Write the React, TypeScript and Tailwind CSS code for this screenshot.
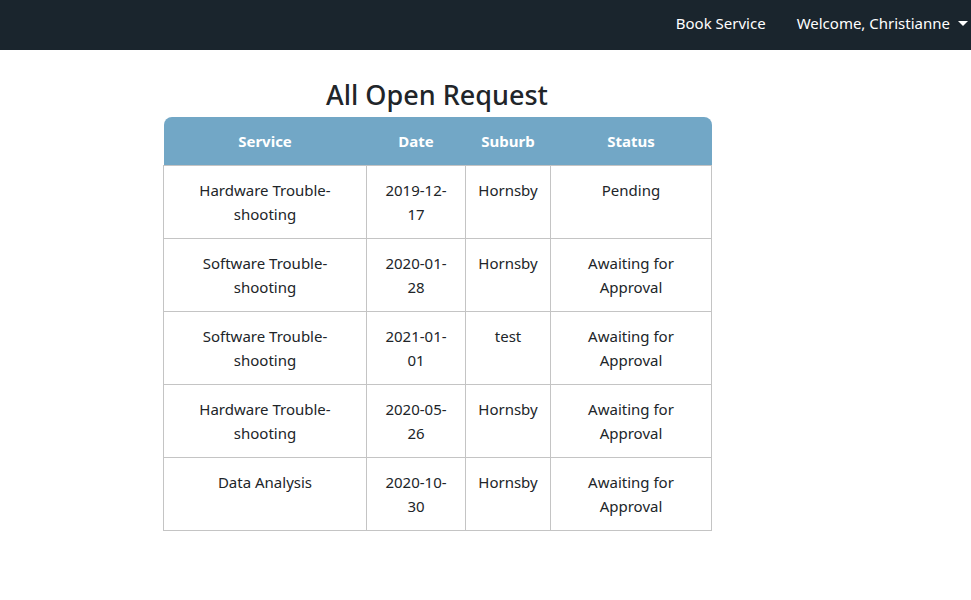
import React from "react";

const rows = [
  { service: "Hardware Trouble-shooting", date: "2019-12-17", suburb: "Hornsby", status: "Pending" },
  { service: "Software Trouble-shooting", date: "2020-01-28", suburb: "Hornsby", status: "Awaiting for Approval" },
  { service: "Software Trouble-shooting", date: "2021-01-01", suburb: "test", status: "Awaiting for Approval" },
  { service: "Hardware Trouble-shooting", date: "2020-05-26", suburb: "Hornsby", status: "Awaiting for Approval" },
  { service: "Data Analysis", date: "2020-10-30", suburb: "Hornsby", status: "Awaiting for Approval" },
];

export default function App() {
  return (
    <div className="min-h-[600px] bg-white text-[#212529]" style={{ fontFamily: '"Noto Sans", "Open Sans", sans-serif' }}>
      <nav className="h-[50px] bg-[#1a252d] flex items-center justify-end pr-[3px] pb-[4px] text-[15px] text-white">
        <span className="mr-[31px]">Book Service</span>
        <span className="flex items-center">
          Welcome, Christianne
          <span className="ml-[8px] w-0 h-0 border-l-[5px] border-r-[5px] border-t-[5px] border-l-transparent border-r-transparent border-t-white" />
        </span>
      </nav>
      <div className="w-[548px] ml-[163px] pt-[28px]">
        <h2 className="text-center text-[27px] font-medium leading-[34px] mb-[5px]">All Open Request</h2>
        <table className="w-[548px] border-collapse table-fixed text-[15px] leading-[24px]">
          <colgroup>
            <col className="w-[203px]" />
            <col className="w-[99px]" />
            <col className="w-[85px]" />
            <col className="w-[161px]" />
          </colgroup>
          <thead>
            <tr className="bg-[#72a7c6] text-white h-[48px]">
              <th className="rounded-tl-[8px] font-bold">Service</th>
              <th className="font-bold">Date</th>
              <th className="font-bold">Suburb</th>
              <th className="rounded-tr-[8px] font-bold">Status</th>
            </tr>
          </thead>
          <tbody>
            {rows.map((r, i) => (
              <tr key={i} className="h-[73px]">
                <td className="border border-[#c4c4c4] align-top text-center px-[12px] pt-[12px]">{r.service}</td>
                <td className="border border-[#c4c4c4] align-top text-center px-[12px] pt-[12px]">{r.date}</td>
                <td className="border border-[#c4c4c4] align-top text-center px-[8px] pt-[12px]">{r.suburb}</td>
                <td className="border border-[#c4c4c4] align-top text-center px-[12px] pt-[12px]">{r.status}</td>
              </tr>
            ))}
          </tbody>
        </table>
      </div>
    </div>
  );
}
